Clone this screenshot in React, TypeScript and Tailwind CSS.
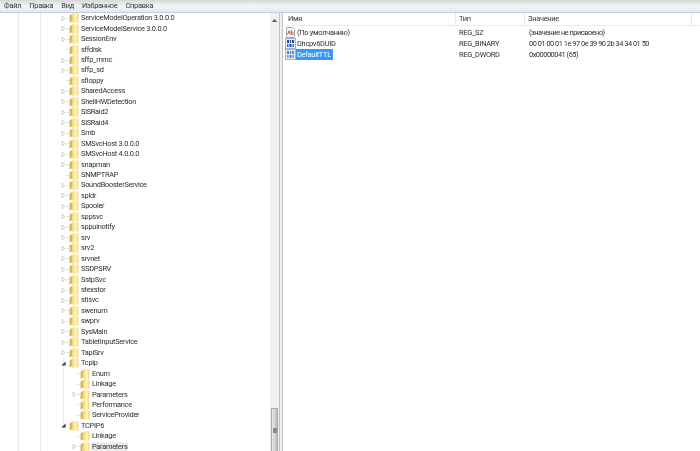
const menu = ["Файл", "Правка", "Вид", "Избранное", "Справка"];

type Node = { name: string; depth?: 0 | 1; mark?: "none" | "closed" | "open"; selected?: boolean };

const TREE: Node[] = [
  { name: "ServiceModelOperation 3.0.0.0", mark: "closed" },
  { name: "ServiceModelService 3.0.0.0", mark: "closed" },
  { name: "SessionEnv", mark: "closed" },
  { name: "sffdisk", mark: "none" },
  { name: "sffp_mmc", mark: "closed" },
  { name: "sffp_sd", mark: "closed" },
  { name: "sfloppy", mark: "none" },
  { name: "SharedAccess", mark: "closed" },
  { name: "ShellHWDetection", mark: "closed" },
  { name: "SiSRaid2", mark: "closed" },
  { name: "SiSRaid4", mark: "closed" },
  { name: "Smb", mark: "closed" },
  { name: "SMSvcHost 3.0.0.0", mark: "closed" },
  { name: "SMSvcHost 4.0.0.0", mark: "closed" },
  { name: "snapman", mark: "closed" },
  { name: "SNMPTRAP", mark: "none" },
  { name: "SoundBoosterService", mark: "closed" },
  { name: "spldr", mark: "closed" },
  { name: "Spooler", mark: "closed" },
  { name: "sppsvc", mark: "closed" },
  { name: "sppuinotify", mark: "closed" },
  { name: "srv", mark: "closed" },
  { name: "srv2", mark: "closed" },
  { name: "srvnet", mark: "closed" },
  { name: "SSDPSRV", mark: "closed" },
  { name: "SstpSvc", mark: "closed" },
  { name: "stexstor", mark: "closed" },
  { name: "stisvc", mark: "closed" },
  { name: "swenum", mark: "closed" },
  { name: "swprv", mark: "closed" },
  { name: "SysMain", mark: "closed" },
  { name: "TabletInputService", mark: "closed" },
  { name: "TapiSrv", mark: "closed" },
  { name: "Tcpip", mark: "open" },
  { name: "Enum", depth: 1, mark: "none" },
  { name: "Linkage", depth: 1, mark: "none" },
  { name: "Parameters", depth: 1, mark: "closed" },
  { name: "Performance", depth: 1, mark: "none" },
  { name: "ServiceProvider", depth: 1, mark: "none" },
  { name: "TCPIP6", mark: "open" },
  { name: "Linkage", depth: 1, mark: "none" },
  { name: "Parameters", depth: 1, mark: "closed", selected: true },
];

function Folder() {
  return (
    <svg width="10" height="10" viewBox="0 0 10 10" className="shrink-0">
      <path d="M0.5 2.5 L3 1 L3 8.5 L0.5 9.5 Z" fill="#dcb85c" />
      <path d="M3 0.5 H9.5 V9.5 H3 Z" fill="#f6dc84" />
      <path d="M5 0.5 H8 V9.5 H5 Z" fill="#fcefb4" />
    </svg>
  );
}

function Mark({ kind }: { kind: Node["mark"] }) {
  if (kind === "closed") {
    return (
      <svg width="5" height="7" viewBox="0 0 5 7" className="shrink-0">
        <path d="M1 1.2 L3.8 3.5 L1 5.8 Z" fill="#fff" stroke="#bcbcbc" strokeWidth="0.7" />
      </svg>
    );
  }
  if (kind === "open") {
    return (
      <svg width="5" height="7" viewBox="0 0 5 7" className="shrink-0">
        <path d="M0.3 5.5 L4.6 5.5 L4.6 1.6 Z" fill="#3c3c3c" />
      </svg>
    );
  }
  return <span className="w-[5px] shrink-0" />;
}

function TreeRow({ node }: { node: Node }) {
  const child = node.depth === 1;
  return (
    <div className={`flex h-[10.46px] items-center ${child ? "pl-[72px]" : "pl-[61px]"}`}>
      <Mark kind={node.mark} />
      <span className={`h-px w-[3px] shrink-0 ${node.mark === "open" ? "bg-transparent" : "bg-[#e2e2e2]"}`} />
      <Folder />
      <span
        className={`ml-px whitespace-nowrap px-px leading-[10px] text-[#2e2e2e] ${node.selected ? "bg-[#ececec]" : ""}`}
      >
        {node.name}
      </span>
    </div>
  );
}

function StringIcon() {
  return (
    <svg width="11" height="11" viewBox="0 0 11 11" className="shrink-0">
      <path d="M1.5 0.5 H7.5 L9.5 2.5 V10.5 H1.5 Z" fill="#fafafa" stroke="#a8a8a8" />
      <path d="M2.5 7.5 L4 3.8 L5.3 7.5 M6.3 3 V7.5 C8.2 8 8.8 6.8 8.4 5.9 C8 5 6.8 5.2 6.3 5.7" fill="none" stroke="#d0532e" strokeWidth="1" />
    </svg>
  );
}

function BinaryIcon({ dim }: { dim?: boolean }) {
  const c = dim ? "#4f7fc8" : "#24489a";
  return (
    <svg width="11" height="11" viewBox="0 0 11 11" className="shrink-0">
      <rect x="0.5" y="0.5" width="10" height="10" fill="#e9f0fa" stroke="#9db2d2" />
      <path d="M2 2 H4 V5 H2 Z M7 2 H9 V5 H7 Z M4.5 6 H6.5 V9 H4.5 Z" fill={c} />
      <path d="M5.5 2 V5 M2.8 6 V9 M8.2 6 V9" stroke={c} strokeWidth="1.2" />
    </svg>
  );
}

const VALUES = [
  { icon: <StringIcon />, name: "(По умолчанию)", type: "REG_SZ", value: "(значение не присвоено)" },
  { icon: <BinaryIcon />, name: "Dhcpv6DUID", type: "REG_BINARY", value: "00 01 00 01 1e 97 0e 39 90 2b 34 34 01 50" },
  { icon: <BinaryIcon dim />, name: "DefaultTTL", type: "REG_DWORD", value: "0x00000041 (65)", selected: true },
];

export default function App() {
  return (
    <div className="flex h-[451px] w-[700px] flex-col overflow-hidden bg-white text-[7.4px] tracking-[-0.26px] text-[#2e2e2e] blur-[0.25px] [font-family:Roboto,sans-serif]">
      <div className="h-[13px] shrink-0 border-b border-[#c4ccd8] bg-gradient-to-b from-[#d8d8d8] via-[#f3f5f8] to-[#dfe9f5]">
        <div className="flex h-full items-center gap-[8px] pl-[4px] text-[#333]">
          {menu.map((m) => (
            <span key={m}>{m}</span>
          ))}
        </div>
      </div>

      <div className="flex min-h-0 flex-1">
        <div className="relative w-[270px] shrink-0 overflow-hidden">
          <span className="absolute left-[18px] top-0 h-full w-px bg-[#e8e8e8]" />
          <span className="absolute left-[40px] top-0 h-full w-px bg-[#e8e8e8]" />
          <span className="absolute left-[63px] top-[346px] h-[66px] w-px bg-[#e8e8e8]" />
          <div className="relative">
            {TREE.map((n, i) => (
              <TreeRow key={i} node={n} />
            ))}
          </div>
        </div>

        <div className="relative w-[9px] shrink-0 bg-[#f0f0f0]">
          <svg width="7" height="5" viewBox="0 0 7 5" className="mx-auto mt-[5px]">
            <path d="M1 4 L3.5 1 L6 4 Z" fill="#555" />
          </svg>
          <div className="absolute bottom-0 left-[1px] flex h-[43px] w-[7px] items-center justify-center rounded-t-[1px] border border-b-0 border-[#a8a8a8] bg-gradient-to-r from-[#e8e8e8] via-[#d4d4d4] to-[#bdbdbd]">
            <span className="h-[5px] w-[4px] bg-[#8a8a8a]" />
          </div>
        </div>

        <div className="w-[4px] shrink-0 border-x border-[#c2c2c6] bg-[#eeeef0]" />

        <div className="flex min-w-0 flex-1 flex-col">
          <div className="flex h-[13px] shrink-0 items-center border-b border-[#ececec] text-[#3a3a3a]">
            <span className="w-[173px] shrink-0 border-r border-[#e8e8e8] pl-[5px]">Имя</span>
            <span className="w-[69px] shrink-0 border-r border-[#e8e8e8] pl-[3px]">Тип</span>
            <span className="w-[167px] shrink-0 border-r border-[#e8e8e8] pl-[3px]">Значение</span>
          </div>
          <div className="pt-[1px]">
            {VALUES.map((v) => (
              <div key={v.name} className="flex h-[11px] items-center">
                <span className="flex w-[173px] shrink-0 items-center pl-[2px]">
                  {v.icon}
                  <span className={`px-px leading-[11px] ${v.selected ? "bg-[#3399ff] pr-[2px] text-white" : ""}`}>{v.name}</span>
                </span>
                <span className="w-[70px] shrink-0 pl-[3px]">{v.type}</span>
                <span className="whitespace-nowrap pl-[3px] tracking-[-0.48px]">{v.value}</span>
              </div>
            ))}
          </div>
        </div>
      </div>
    </div>
  );
}
